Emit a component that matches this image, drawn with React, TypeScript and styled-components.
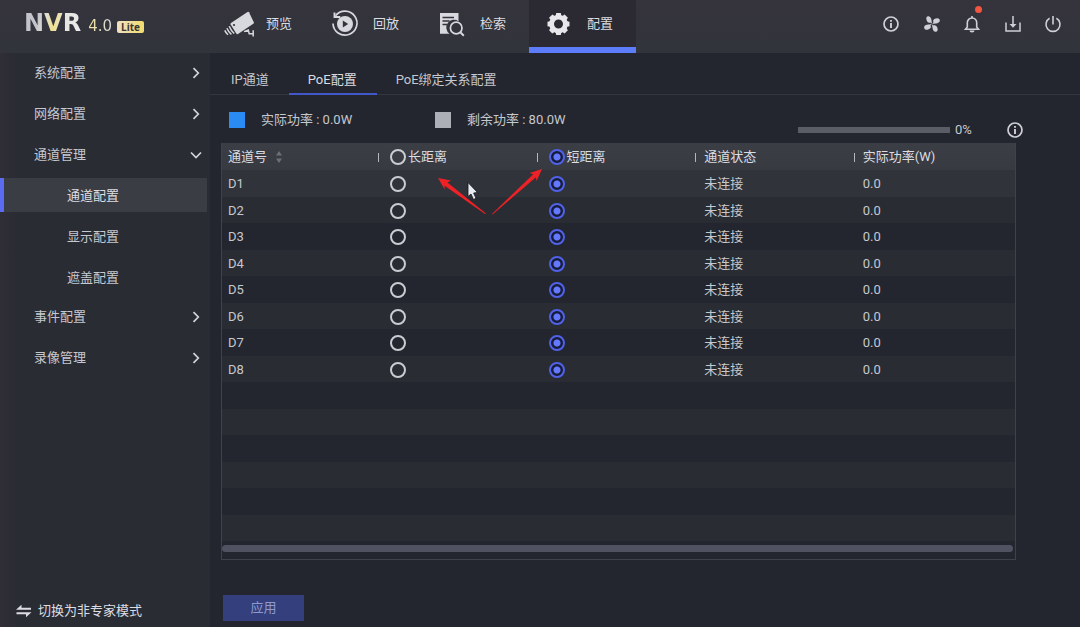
import React, { useState } from "react";
import styled, { createGlobalStyle, css } from "styled-components";

const color = {
  page: "#23262e",
  side: "#2a2c34",
  line: "#33363e",
  frame: "#3f424b",
  text: "#c6c8cf",
  bright: "#dcdde2",
  accent: "#5c7cfa",
  radio: "#4f62e8",
};

const Global = createGlobalStyle`
  *, *::before, *::after { box-sizing: border-box; }
  body {
    margin: 0;
    background: ${color.page};
    color: ${color.text};
    font: 13px/20px Roboto, "Noto Sans CJK SC", sans-serif;
  }
  button { font: inherit; color: inherit; background: none; border: 0; padding: 0; cursor: pointer; }
  svg { display: block; }
  ul { list-style: none; margin: 0; padding: 0; }
`;

const Shell = styled.div`
  display: flex;
  flex-direction: column;
  min-height: 100vh;
`;

const Header = styled.header`
  display: flex;
  align-items: stretch;
  height: 53px;
  padding-right: 18px;
  background: linear-gradient(#35333c, #31343b);
`;

const Brand = styled.div`
  display: flex;
  align-items: baseline;
  width: 208px;
  padding: 8px 0 0 24px;
  font-family: "DejaVu Sans", sans-serif;
  line-height: 30px;
`;

const BrandName = styled.strong`
  font-size: 24px;
  background: linear-gradient(100deg, #c3c3cb 25%, #e2e0cf 38%, #f0e08c 52%, #e6e4dc 66%, #ececf2);
  background-clip: text;
  color: transparent;
`;

const BrandVersion = styled.span`
  margin-left: 7px;
  font-size: 15px;
  background: linear-gradient(90deg, #f0e39a, #d8d8de);
  background-clip: text;
  color: transparent;
`;

const BrandBadge = styled.span`
  margin-left: 5px;
  padding: 0 4px;
  border-radius: 2px;
  background: linear-gradient(90deg, #f0dfc4, #f1dc6c);
  color: #3a3630;
  font: bold 10px/12px "Open Sans", sans-serif;
`;

const Nav = styled.nav`
  display: flex;
  flex: 1;
`;

const NavButton = styled.button<{ $active?: boolean }>`
  display: flex;
  align-items: center;
  gap: 12px;
  width: 107px;
  padding: 0 0 0 14px;
  border-top: 6px solid transparent;
  border-bottom: 6px solid transparent;
  color: ${color.bright};
  ${(p) =>
    p.$active &&
    css`
      background: #2b2a32;
      border-bottom-color: ${color.accent};
    `}
  svg { margin-top: -6px; }
  span { margin-top: -5px; }
`;

const Tools = styled.div`
  display: flex;
  justify-content: space-between;
  align-items: center;
  width: 180px;
  padding-bottom: 6px;
`;

const ToolButton = styled.button`
  position: relative;
  color: #cfd0d6;
`;

const Dot = styled.i`
  position: absolute;
  top: -9px;
  right: -1px;
  width: 7px;
  height: 7px;
  border-radius: 50%;
  background: #f4553f;
`;

const Body = styled.div`
  display: flex;
  flex: 1;
`;

const Sidebar = styled.aside`
  display: flex;
  flex-direction: column;
  width: 210px;
  background: linear-gradient(90deg, #302d36, ${color.side} 16px);
`;

const Menu = styled.ul`
  display: flex;
  flex-direction: column;
  gap: 1px;
`;

const MenuButton = styled.button`
  display: flex;
  align-items: center;
  justify-content: space-between;
  width: 100%;
  height: 40px;
  padding: 0 8px 0 34px;
`;

const SubMenu = styled.ul`
  display: flex;
  flex-direction: column;
  gap: 7px;
  padding: 3px 3px 2px 0;
`;

const SubButton = styled.button<{ $active?: boolean }>`
  display: block;
  width: 100%;
  height: 34px;
  padding: 1px 0 0 63px;
  border-left: 4px solid transparent;
  text-align: left;
  ${(p) =>
    p.$active &&
    css`
      background: #3b3d45;
      border-left-color: #5b6cf0;
      color: ${color.bright};
    `}
`;

const ModeSwitch = styled.button`
  display: flex;
  align-items: center;
  gap: 6px;
  margin-top: auto;
  padding: 0 0 6px 16px;
  color: ${color.bright};
`;

const Main = styled.main`
  display: flex;
  flex-direction: column;
  flex: 1;
  min-width: 0;
`;

const Tabs = styled.div`
  display: flex;
  height: 42px;
  padding-left: 2px;
  border-bottom: 1px solid ${color.line};
`;

const Tab = styled.button<{ $active?: boolean }>`
  height: 42px;
  padding: 17px 20px 3px 19px;
  border-bottom: 2px solid ${(p) => (p.$active ? "#4257c9" : "transparent")};
  color: ${(p) => (p.$active ? color.bright : color.text)};
`;

const Summary = styled.div`
  display: flex;
  align-items: center;
  height: 48px;
  padding: 2px 56px 0 19px;
`;

const Legend = styled.div`
  display: flex;
  align-items: center;
  gap: 16px;
  width: 206px;
`;

const Swatch = styled.i<{ $fill: string }>`
  width: 16px;
  height: 16px;
  background: ${(p) => p.$fill};
`;

const Usage = styled.div`
  display: flex;
  align-items: center;
  margin-left: auto;
  padding-top: 19px;
`;

const Meter = styled.progress`
  appearance: none;
  width: 152px;
  height: 6px;
  border: 0;
  margin-right: 5px;
  &::-webkit-progress-bar { background: #5b5d66; }
  &::-webkit-progress-value { background: #2d8cf0; }
`;

const MeterText = styled.label`
  width: 51px;
`;

const Frame = styled.div`
  display: flex;
  flex-direction: column;
  margin: 0 64px 0 11px;
  border: 1px solid ${color.frame};
  border-top: 0;
`;

const Table = styled.table`
  width: 100%;
  table-layout: fixed;
  border-collapse: collapse;
`;

const HeadRow = styled.tr`
  height: 27px;
  background: linear-gradient(#3b3e45, #383a41);
  color: ${color.bright};
`;

const HeadCell = styled.th<{ $width?: string; $pad?: number; $gap?: number }>`
  width: ${(p) => p.$width ?? "20%"};
  padding: 1px 0 0 ${(p) => p.$pad ?? 0}px;
  font-weight: normal;
  text-align: left;
  > div {
    display: flex;
    align-items: center;
    gap: ${(p) => p.$gap ?? 8}px;
  }
`;

const Divider = styled.i`
  width: 1px;
  height: 9px;
  background: #b4b6bd;
`;

const Choice = styled.label`
  display: flex;
  align-items: center;
  gap: 2px;
`;

const Row = styled.tr`
  height: 27px;
  &:nth-child(even) { height: 26px; background: #292c33; }
  &:first-child { background: #303339; }
`;

const Cell = styled.td<{ $pad: number }>`
  padding: 1px 0 0 ${(p) => p.$pad}px;
`;

const Radio = styled.input`
  appearance: none;
  display: block;
  width: 16px;
  height: 16px;
  margin: 0;
  border: 2px solid #cbccd2;
  border-radius: 50%;
  &:checked {
    border-color: ${color.radio};
    background: radial-gradient(circle, #6479ff 3px, #171c3a 4px);
  }
`;

const ScrollTrack = styled.div`
  padding: 4px 2px 7px 0;
`;

const ScrollThumb = styled.div`
  height: 7px;
  border-radius: 4px;
  background: #505262;
`;

const Apply = styled.button`
  align-self: flex-start;
  width: 81px;
  height: 26px;
  margin: 35px 0 6px 13px;
  background: #343f7e;
  color: #8e9acb;
`;

const Annotation = styled.svg`
  position: absolute;
  left: 430px;
  top: 160px;
  pointer-events: none;
`;

const CameraIcon = () => (
  <svg width="32" height="28" viewBox="0 0 32 28" fill="#d8d9de">
    <path d="M9 13 25.500 1.900q1-.6 1.500.4L31.800 12.200q.4 1-.5 1.600L16 23.900q-1 .6-1.700-.3L8.600 14.400q-.4-.8.4-1.400Z" />
    <circle cx="12" cy="15" r="1.100" fill="#34333b" />
    <path
      d="M7.200 16.200q1.800 4.300 5 7.300M4.900 18.300q1.500 3.600 4.500 6M2.800 20.400q1 2.500 3.200 4.400M22 21.600l4.300-1.600.9 3.700h3.800M31.200 20.300v6.200"
      fill="none"
      stroke="#d8d9de"
      strokeWidth="1.500"
    />
  </svg>
);

const ReplayIcon = () => (
  <svg width="32" height="28" viewBox="0 0 32 28" fill="none">
    <path d="M6.500 5.800A12 12 0 1 1 4 13.500" stroke="#d8d9de" strokeWidth="1.700" />
    <path d="M5.500 2.500V7h5.800" stroke="#d8d9de" strokeWidth="1.900" />
    <circle cx="16" cy="14" r="8" fill="#d8d9de" />
    <path d="M13.800 10.600v6.800l5.400-3.400Z" fill="#34333b" />
  </svg>
);

const SearchIcon = () => (
  <svg width="32" height="28" viewBox="0 0 32 28" fill="none">
    <path d="M4 3h18.500v8.200A7.200 7.200 0 0 0 13.500 23.700H4Z" fill="#d8d9de" />
    <path d="M6.500 7.500H18M6.500 11h7M6.500 14.500H11" stroke="#34333b" strokeWidth="1.600" />
    <circle cx="20.200" cy="18" r="5.800" stroke="#d8d9de" strokeWidth="1.700" />
    <path d="m24.300 22.300 3.500 3.400" stroke="#d8d9de" strokeWidth="2" />
  </svg>
);

const teeth = [0, 45, 90, 135, 180, 225, 270, 315];

const GearIcon = () => (
  <svg width="32" height="28" viewBox="0 0 32 28">
    {teeth.map((angle) => (
      <path key={angle} d="M12.400 7 13.200 3h4.600L18.600 7Z" transform={`rotate(${angle} 15.500 14)`} fill="#e8e8ec" />
    ))}
    <circle cx="15.500" cy="14" r="6.900" fill="none" stroke="#e8e8ec" strokeWidth="4.800" />
  </svg>
);

const InfoIcon = () => (
  <svg width="18" height="18" viewBox="0 0 18 18" fill="none" stroke="currentColor">
    <circle cx="9" cy="9" r="7" strokeWidth="1.700" />
    <path d="M9 8v5M9 5v1.700" strokeWidth="1.900" />
  </svg>
);

const FanIcon = () => (
  <svg width="18" height="18" viewBox="0 0 18 18" fill="currentColor">
    {[0, 90, 180, 270].map((angle) => (
      <g key={angle} transform={`rotate(${angle} 9 9)`}>
        <ellipse cx="5.900" cy="4.500" rx="2.400" ry="3.400" transform="rotate(-18 5.900 4.500)" />
        <path d="M6.500 6.500 8.300 5.500 9.300 9.300Z" />
      </g>
    ))}
    <circle cx="9" cy="9" r="0.800" fill="#34333b" />
  </svg>
);

const BellIcon = () => (
  <svg width="18" height="18" viewBox="0 0 18 18" fill="none" stroke="currentColor" strokeWidth="1.600">
    <path d="M2.500 14.200 4.300 12V7.700a4.700 4.700 0 0 1 9.400 0V12l1.800 2.200Z" />
    <path d="M9 1v2" />
    <path d="M6.500 15.500a2.500 2 0 0 0 5 0Z" fill="currentColor" stroke="none" />
  </svg>
);

const DownloadIcon = () => (
  <svg width="18" height="18" viewBox="0 0 18 18" fill="none" stroke="currentColor" strokeWidth="1.500">
    <path d="M2 7.500V16h14V7.500M9 1v10" />
    <path d="m5.500 9 3.500 3.700L12.500 9Z" fill="currentColor" stroke="none" />
  </svg>
);

const PowerIcon = () => (
  <svg width="18" height="18" viewBox="0 0 18 18" fill="none" stroke="currentColor" strokeWidth="1.600">
    <path d="M5.600 3.300a7 7 0 1 0 6.800 0M9 1v8.500" />
  </svg>
);

const Chevron = ({ open }: { open?: boolean }) => (
  <svg width="12" height="12" viewBox="0 0 12 12" fill="none" stroke="#d4d5da" strokeWidth="1.700">
    <path d={open ? "m1 3.500 5 5 5-5" : "m3.500 1.200 4.800 4.800-4.800 4.800"} />
  </svg>
);

const SwapIcon = () => (
  <svg width="16" height="14" viewBox="0 0 16 14" fill="#dcdde2">
    <path d="M0 5.800 5.500 .8v3H15v2ZM15.500 8.300 10 13.300v-3H.5v-2Z" />
  </svg>
);

const SortIcon = () => (
  <svg width="8" height="14" viewBox="0 0 8 14" fill="#6d7078">
    <path d="M1 5.500 4 1l3 4.500ZM1 8.500 4 13l3-4.500Z" />
  </svg>
);

const navItems = [
  { label: "预览", Icon: CameraIcon },
  { label: "回放", Icon: ReplayIcon },
  { label: "检索", Icon: SearchIcon },
  { label: "配置", Icon: GearIcon },
];

const menuItems: { label: string; children?: string[] }[] = [
  { label: "系统配置" },
  { label: "网络配置" },
  { label: "通道管理", children: ["通道配置", "显示配置", "遮盖配置"] },
  { label: "事件配置" },
  { label: "录像管理" },
];

const tabItems = ["IP通道", "PoE配置", "PoE绑定关系配置"];
const channels = ["D1", "D2", "D3", "D4", "D5", "D6", "D7", "D8"];
const emptyRows = [1, 2, 3, 4, 5, 6];

type Range = "long" | "short";

export default function App() {
  const [ranges, setRanges] = useState<Range[]>(channels.map(() => "short"));
  const setAll = (range: Range) => setRanges(channels.map(() => range));
  const setOne = (index: number, range: Range) =>
    setRanges((prev) => prev.map((r, i) => (i === index ? range : r)));

  return (
    <Shell>
      <Global />
      <Header>
        <Brand>
          <BrandName>NVR</BrandName>
          <BrandVersion>4.0</BrandVersion>
          <BrandBadge>Lite</BrandBadge>
        </Brand>
        <Nav>
          {navItems.map(({ label, Icon }) => (
            <NavButton key={label} $active={label === "配置"}>
              <Icon />
              <span>{label}</span>
            </NavButton>
          ))}
        </Nav>
        <Tools>
          <ToolButton aria-label="信息"><InfoIcon /></ToolButton>
          <ToolButton aria-label="风扇"><FanIcon /></ToolButton>
          <ToolButton aria-label="报警"><BellIcon /><Dot /></ToolButton>
          <ToolButton aria-label="下载"><DownloadIcon /></ToolButton>
          <ToolButton aria-label="电源"><PowerIcon /></ToolButton>
        </Tools>
      </Header>
      <Body>
        <Sidebar>
          <Menu>
            {menuItems.map((item) => (
              <li key={item.label}>
                <MenuButton>
                  {item.label}
                  <Chevron open={!!item.children} />
                </MenuButton>
                {item.children && (
                  <SubMenu>
                    {item.children.map((child, i) => (
                      <li key={child}>
                        <SubButton $active={i === 0}>{child}</SubButton>
                      </li>
                    ))}
                  </SubMenu>
                )}
              </li>
            ))}
          </Menu>
          <ModeSwitch>
            <SwapIcon />
            切换为非专家模式
          </ModeSwitch>
        </Sidebar>
        <Main>
          <Tabs>
            {tabItems.map((tab, i) => (
              <Tab key={tab} $active={i === 1}>{tab}</Tab>
            ))}
          </Tabs>
          <Summary>
            <Legend><Swatch $fill="#2a8bf2" />实际功率 : 0.0W</Legend>
            <Legend><Swatch $fill="#adafb7" />剩余功率 : 80.0W</Legend>
            <Usage>
              <Meter id="usage" value={0} max={100} />
              <MeterText htmlFor="usage">0%</MeterText>
              <ToolButton aria-label="功率说明"><InfoIcon /></ToolButton>
            </Usage>
          </Summary>
          <Frame>
            <Table>
              <thead>
                <HeadRow>
                  <HeadCell $width="156px" $pad={6}><div>通道号 <SortIcon /></div></HeadCell>
                  <HeadCell $gap={11}>
                    <div>
                      <Divider />
                      <Choice>
                        <Radio type="radio" name="all" checked={ranges.every((r) => r === "long")} onChange={() => setAll("long")} />
                        长距离
                      </Choice>
                    </div>
                  </HeadCell>
                  <HeadCell $gap={11}>
                    <div>
                      <Divider />
                      <Choice>
                        <Radio type="radio" name="all" checked={ranges.every((r) => r === "short")} onChange={() => setAll("short")} />
                        短距离
                      </Choice>
                    </div>
                  </HeadCell>
                  <HeadCell><div><Divider />通道状态</div></HeadCell>
                  <HeadCell $width="auto"><div><Divider />实际功率(W)</div></HeadCell>
                </HeadRow>
              </thead>
              <tbody>
                {channels.map((channel, i) => (
                  <Row key={channel}>
                    <Cell $pad={6}>{channel}</Cell>
                    <Cell $pad={12}>
                      <Radio type="radio" name={channel} aria-label={`${channel} 长距离`} checked={ranges[i] === "long"} onChange={() => setOne(i, "long")} />
                    </Cell>
                    <Cell $pad={12}>
                      <Radio type="radio" name={channel} aria-label={`${channel} 短距离`} checked={ranges[i] === "short"} onChange={() => setOne(i, "short")} />
                    </Cell>
                    <Cell $pad={9}>未连接</Cell>
                    <Cell $pad={9}>0.0</Cell>
                  </Row>
                ))}
                {emptyRows.map((row) => (
                  <Row key={row}><Cell $pad={6} colSpan={5} /></Row>
                ))}
              </tbody>
            </Table>
            <ScrollTrack><ScrollThumb /></ScrollTrack>
          </Frame>
          <Apply>应用</Apply>
        </Main>
      </Body>
      <Annotation width="120" height="60" viewBox="430 160 120 60">
        <g fill="#ee2226">
          <path d="M438 178 451 180.500 447.400 182.500 486 213.500 485 213.900 444.600 185.700 444.700 189.500Z" />
          <path d="M542 169 536.600 181 535.900 177.200 492.500 214.600 492 214 533.200 174.200 529.500 173Z" />
        </g>
        <path d="M468 182.500V196.500L471 194 473.500 199.500 476 198.300 473.600 193 477.500 192.500Z" fill="#e9ebf2" stroke="#15171c" strokeWidth="0.800" />
      </Annotation>
    </Shell>
  );
}
